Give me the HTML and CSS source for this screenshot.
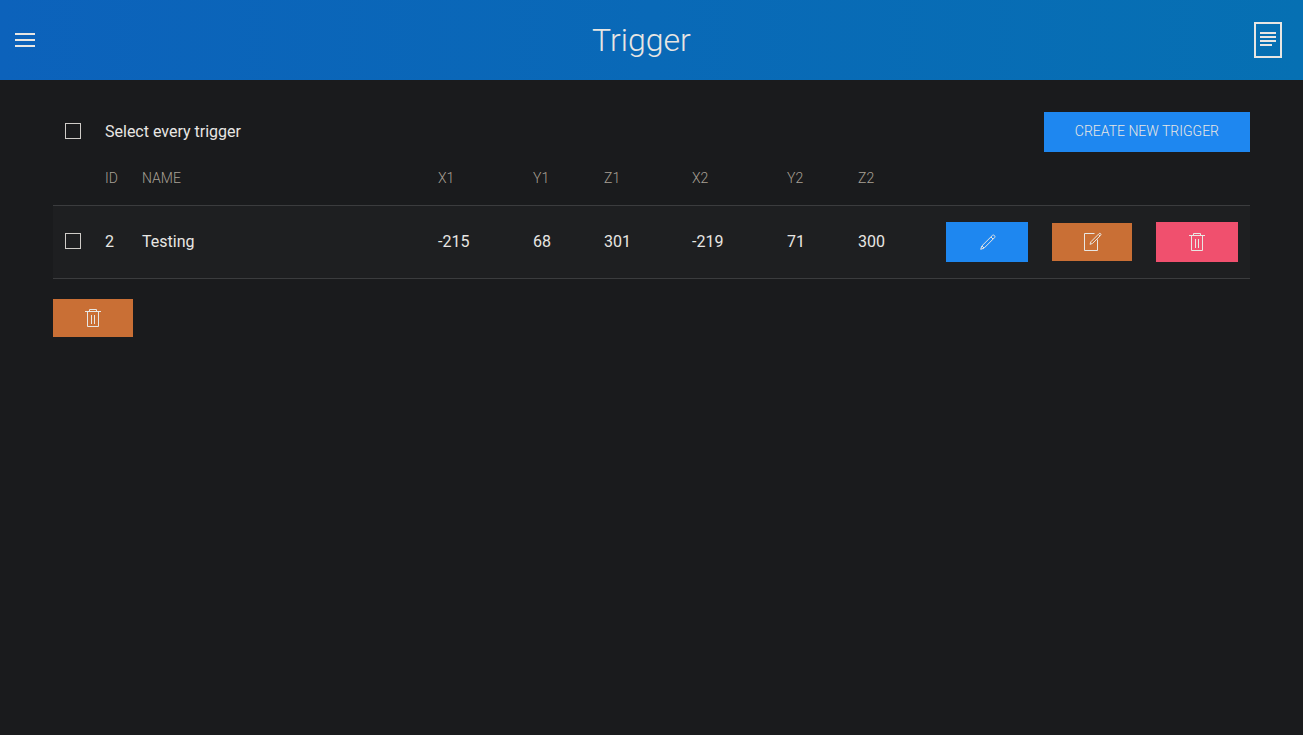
FILE: index.html
```html
<!DOCTYPE html>
<html lang="en">
<head>
<meta charset="utf-8">
<meta name="viewport" content="width=device-width, initial-scale=1">
<title>Trigger</title>
<link rel="stylesheet" href="styles.css">
</head>
<body>
<svg class="symbols" aria-hidden="true">
  <symbol id="trash" viewBox="0 0 20 20">
    <path d="M6.5 3V1.5h7V3M2 3.5h16M4.5 4v14.500h11V4M8.500 7v9M11.500 7v9" fill="none" stroke="currentColor"/>
  </symbol>
  <symbol id="pencil" viewBox="0 0 20 20">
    <path fill="none" stroke="currentColor" d="M17.500 5.700 7.100 16.100 3.700 17.300 4.900 13.900 15.300 3.500C15.900 2.900 16.700 2.900 17.400 3.500 18.100 4.200 18.100 5.100 17.500 5.700ZM16 7 14 5M7 16 5 14"/>
  </symbol>
  <symbol id="file-edit" viewBox="0 0 20 20">
    <path fill="none" stroke="currentColor" d="M18.650 1.680C18.410 1.450 18.109 1.330 17.810 1.330 17.499 1.330 17.209 1.450 16.980 1.680L8.920 9.760 8 12.330 10.550 11.410 18.651 3.340C19.120 2.870 19.120 2.150 18.650 1.680ZM16.500 2.550 18 4.050M15.500 7.500V18.500H2.500V1.500H12.500"/>
  </symbol>
</svg>
<header class="navbar">
  <button class="nav-button" type="button" aria-label="Menu">
    <svg width="20" height="20" viewBox="0 0 20 20"><path d="M0 3h20v2H0zM0 9h20v2H0zM0 15h20v2H0z" fill="currentColor"/></svg>
  </button>
  <h1 class="title">Trigger</h1>
  <button class="nav-button" type="button" aria-label="Log">
    <svg width="28" height="36" viewBox="0 0 28 36"><path d="M1 1h26v34H1z" fill="none" stroke="currentColor" stroke-width="2"/><path d="M6 10h16v2H6zM6 14h16v2H6zM6 18h16v2H6zM6 22h12v2H6z" fill="currentColor"/></svg>
  </button>
</header>
<main class="content">
  <div class="toolbar">
    <label class="select-all"><input class="check" type="checkbox">Select every trigger</label>
    <button class="button primary create" type="button">Create new trigger</button>
  </div>
  <table class="triggers">
    <colgroup>
      <col class="col-check"><col class="col-id"><col><col class="col-x"><col class="col-y"><col class="col-z"><col class="col-x"><col class="col-y"><col class="col-z"><col class="col-action"><col class="col-edit"><col class="col-action">
    </colgroup>
    <thead>
      <tr><th></th><th>ID</th><th>Name</th><th>X1</th><th>Y1</th><th>Z1</th><th>X2</th><th>Y2</th><th>Z2</th><th></th><th></th><th></th></tr>
    </thead>
    <tbody>
      <tr>
        <td><input class="check" type="checkbox" aria-label="Select Testing"></td>
        <td>2</td><td>Testing</td><td>-215</td><td>68</td><td>301</td><td>-219</td><td>71</td><td>300</td>
        <td><button class="button primary" type="button" aria-label="Rename"><svg class="icon"><use href="#pencil"/></svg></button></td>
        <td><button class="button secondary" type="button" aria-label="Edit"><svg class="icon"><use href="#file-edit"/></svg></button></td>
        <td><button class="button danger" type="button" aria-label="Delete"><svg class="icon"><use href="#trash"/></svg></button></td>
      </tr>
    </tbody>
  </table>
  <button class="button secondary" type="button" aria-label="Delete selected"><svg class="icon"><use href="#trash"/></svg></button>
</main>
</body>
</html>
```
FILE: styles.css
```css
* {
  box-sizing: border-box;
}

body {
  margin: 0;
  background: #1a1b1d;
  color: #e8e6e3;
  font: 400 16px/24px Roboto, sans-serif;
}

.symbols {
  display: none;
}

.navbar {
  display: grid;
  grid-template-columns: 1fr auto 1fr;
  align-items: center;
  height: 80px;
  padding: 0 21px 0 15px;
  background: linear-gradient(to right, #0c62bb, #0670b3);
}

.nav-button {
  display: flex;
  padding: 0;
  border: 0;
  background: none;
  color: inherit;
  cursor: pointer;
}

.nav-button:last-child {
  justify-self: end;
}

.title {
  margin: 0;
  padding-right: 14px;
  font-size: 32px;
  font-weight: 300;
  line-height: 40px;
}

.content {
  padding: 32px 53px;
}

.toolbar {
  display: flex;
  align-items: center;
  justify-content: space-between;
}

.select-all {
  display: flex;
  align-items: center;
  gap: 24px;
  padding: 0 12px;
}

.check {
  display: block;
  appearance: none;
  width: 16px;
  height: 16px;
  margin: 0 0 2px;
  border: 1px solid #cfccc8;
}

.check:checked {
  background: #1e87f0;
}

.button {
  display: flex;
  align-items: center;
  justify-content: center;
  width: 82px;
  height: 40px;
  padding: 0;
  border: 0;
  color: #e8e6e3;
  font: 400 14px/38px Roboto, sans-serif;
  text-transform: uppercase;
  cursor: pointer;
}

.primary {
  background: #1e87f0;
}

.secondary {
  width: 80px;
  height: 38px;
  background: #c96f35;
}

.danger {
  background: #f0506e;
}

.create {
  width: auto;
  padding: 0 31px 2px;
  font-weight: 300;
}

.icon {
  width: 20px;
  height: 20px;
}

.triggers {
  width: 100%;
  margin-bottom: 20px;
  border-collapse: collapse;
  table-layout: fixed;
}

.col-check { width: 40px; }
.col-id { width: 37px; }
.col-x { width: 95px; }
.col-y { width: 71px; }
.col-z { width: 88px; }
.col-action { width: 106px; }
.col-edit { width: 104px; }

.triggers th {
  padding: 14px 12px 15px;
  color: #a8a095;
  font-size: 14px;
  font-weight: 300;
  text-align: left;
  text-transform: uppercase;
}

.triggers td {
  padding: 16px 12px;
}

.triggers tbody tr {
  border: solid #3b3c3e;
  border-width: 1px 0;
  background: #1e1f21;
}
```
